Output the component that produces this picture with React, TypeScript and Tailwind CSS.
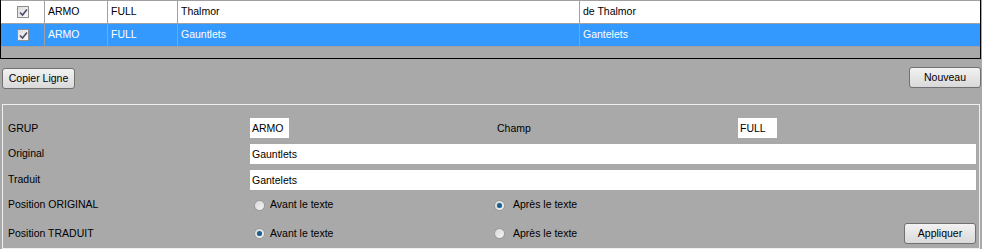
import React from 'react'

const font = { fontFamily: '"Liberation Sans", Arial, sans-serif' }

function CheckBox() {
  return (
    <span className="flex h-[12px] w-[12px] items-center justify-center border border-[#8f8f8f] bg-gradient-to-br from-[#dcdcdc] to-[#fbfbfb]">
      <svg width="9" height="9" viewBox="0 0 9 9">
        <path d="M1 4.5 L3.5 7 L8 1.5" fill="none" stroke="#4a4a6a" strokeWidth="1.6" />
      </svg>
    </span>
  )
}

function Radio({ checked }: { checked?: boolean }) {
  return (
    <span className="flex h-[11px] w-[11px] items-center justify-center rounded-full border border-[#9a9a9a] bg-gradient-to-br from-[#d8d8d8] to-[#f6f6f6]">
      {checked && <span className="h-[5px] w-[5px] rounded-full bg-[#1d5f8a] shadow-[0_0_1px_#6fb7e0]" />}
    </span>
  )
}

function WinButton({ label, className = '' }: { label: string; className?: string }) {
  return (
    <button className={`h-[21px] rounded-[3px] border border-[#707070] bg-gradient-to-b from-[#f2f2f2] to-[#d9d9d9] text-black ${className}`}>
      {label}
    </button>
  )
}

const rows = [
  { grup: 'ARMO', champ: 'FULL', original: 'Thalmor', traduit: 'de Thalmor', selected: false },
  { grup: 'ARMO', champ: 'FULL', original: 'Gauntlets', traduit: 'Gantelets', selected: true },
]

export default function App() {
  return (
    <div className="h-[249px] w-[982px] overflow-hidden bg-[#a9a9a9] text-[10.5px] text-black" style={font}>
      {/* grille */}
      <div className="h-[59px] w-[981px] border-x border-b border-black">
        <div className="border-t border-[#a0a0a0]">
          {rows.map((r, i) => (
            <div
              key={i}
              className={`grid h-[23px] grid-cols-[44px_63px_70px_402px_1fr] border-b border-[#a0a0a0] ${
                r.selected ? 'bg-[#3399ff] text-white' : 'bg-white'
              }`}
            >
              <div className="flex items-center justify-center border-r border-[#a0a0a0] pl-[1px]">
                <CheckBox />
              </div>
              <div className="flex items-center border-r border-[#a0a0a0] pl-[3px]">{r.grup}</div>
              <div className="flex items-center border-r border-[#a0a0a0] pl-[3px]">{r.champ}</div>
              <div className="flex items-center border-r border-[#a0a0a0] pl-[3px]">{r.original}</div>
              <div className="flex items-center pl-[3px]">{r.traduit}</div>
            </div>
          ))}
        </div>
      </div>

      {/* boutons */}
      <div className="flex items-start justify-between pl-[2px] pr-[1px] pt-[8px]">
        <WinButton label="Copier Ligne" className="mt-[1px] w-[73px]" />
        <WinButton label="Nouveau" className="w-[72px]" />
      </div>

      {/* édition */}
      <div className="ml-[2px] mt-[15px] h-[145px] w-[978px] border border-[#efefef] pl-[5px] pr-[3px]">
        <div className="grid grid-cols-[242px_247px_241px_1fr] items-center pt-[13px]">
          <div className="h-[20px] leading-[20px]">GRUP</div>
          <div>
            <div className="h-[20px] w-[39px] bg-white pl-[2px] leading-[20px]">ARMO</div>
          </div>
          <div className="h-[20px] leading-[20px]">Champ</div>
          <div>
            <div className="h-[20px] w-[39px] bg-white pl-[2px] leading-[20px]">FULL</div>
          </div>
        </div>

        <div className="mt-[6px] flex items-center">
          <div className="w-[242px]">Original</div>
          <div className="h-[20px] flex-1 bg-white pl-[2px] leading-[20px]">Gauntlets</div>
        </div>

        <div className="mt-[6px] flex items-center">
          <div className="w-[242px]">Traduit</div>
          <div className="h-[20px] flex-1 bg-white pl-[2px] leading-[20px]">Gantelets</div>
        </div>

        <div className="mt-[5px] grid h-[20px] grid-cols-[242px_244px_1fr] items-center">
          <div>Position ORIGINAL</div>
          <div className="flex items-center gap-[5px] pl-[4px]">
            <Radio />
            <span>Avant le texte</span>
          </div>
          <div className="flex items-center gap-[8px]">
            <Radio checked />
            <span>Après le texte</span>
          </div>
        </div>

        <div className="mt-[8px] grid h-[20px] grid-cols-[242px_244px_1fr_auto] items-center">
          <div>Position TRADUIT</div>
          <div className="flex items-center gap-[5px] pl-[4px]">
            <Radio checked />
            <span>Avant le texte</span>
          </div>
          <div className="flex items-center gap-[8px]">
            <Radio />
            <span>Après le texte</span>
          </div>
          <WinButton label="Appliquer" className="w-[72px]" />
        </div>
      </div>
    </div>
  )
}
